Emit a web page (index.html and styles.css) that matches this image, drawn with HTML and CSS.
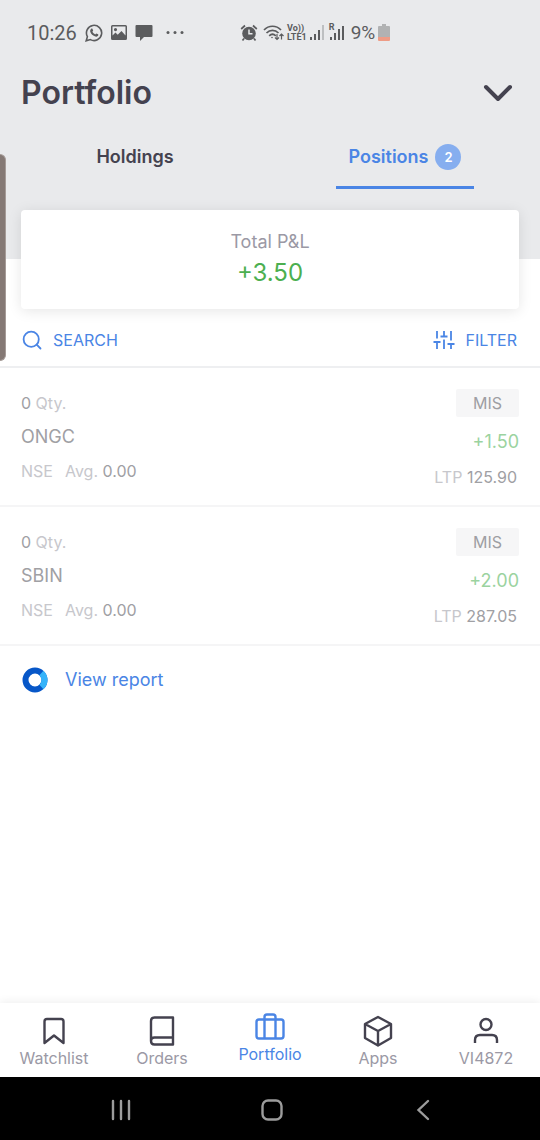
FILE: index.html
```html
<!DOCTYPE html>
<html lang="en">
<head>
<meta charset="utf-8">
<meta name="viewport" content="width=device-width, initial-scale=1">
<title>Portfolio</title>
<link rel="stylesheet" href="styles.css">
</head>
<body>
<div class="edge-handle"></div>
<header class="header">
  <div class="status">
    <div class="status-group status-left">
      <span class="clock">10:26</span>
      <svg width="18" height="18" viewBox="0 0 18 18" fill="none" stroke="currentColor" stroke-width="1.6"><path d="M1.2 16.8l1.2-4.2a7.6 7.6 0 1 1 3 3z"/><path d="M6 5c.5-.6 1.2-.6 1.5 0l.7 1.6-.8 1.2c.6 1.2 1.5 2 2.8 2.6l1.1-1 1.8.9c.5.4.2 1.4-.4 1.800-1 .9-2.700.6-4.400-.5C6.700 10.500 5.500 9 5.200 7.500 5.100 6.500 5.500 5.500 6 5z" fill="currentColor" stroke="none"/></svg>
      <svg width="16" height="16" viewBox="0 0 16 16"><path fill="currentColor" fill-rule="evenodd" d="M1.500 0h13A1.500 1.500 0 0 1 16 1.500v12a1.500 1.500 0 0 1-1.500 1.500h-13A1.500 1.500 0 0 1 0 13.500v-12A1.500 1.500 0 0 1 1.500 0zM1.500 1.500v9l3-3 2.200 2.200L10.500 6l4 4.500v-9zM4.500 3a1.600 1.600 0 1 1 0 3.200 1.600 1.600 0 0 1 0-3.200z"/></svg>
      <svg width="18" height="18" viewBox="0 0 18 18"><path fill="currentColor" d="M1.500 1h15Q17.500 1 17.500 2v10q0 1-1 1H9l-4 4v-4H1.500q-1 0-1-1V2q0-1 1-1z"/></svg>
      <svg class="dots" width="20" height="6" viewBox="0 0 20 6" fill="currentColor"><circle cx="3" cy="2.500" r="1.500"/><circle cx="10" cy="2.500" r="1.500"/><circle cx="17" cy="2.500" r="1.500"/></svg>
    </div>
    <div class="status-group status-right">
      <svg width="18" height="18" viewBox="0 0 18 18"><circle cx="9" cy="9.500" r="6.800" fill="currentColor"/><path d="M1.200 5L5 1.500M16.800 5L13 1.500M4 14.500l-1.500 2M14 14.500l1.500 2" stroke="currentColor" stroke-width="1.700"/><path d="M9 5.500v4.300h3.500" fill="none" stroke="#e9eaec" stroke-width="1.500"/></svg>
      <svg class="wifi" width="21" height="18" viewBox="0 0 21 18" fill="none" stroke="currentColor" stroke-width="1.700"><path d="M1 6c4.800-5 12.200-5 17 0M3.500 9c3.500-3.600 8.500-3.600 12 0M6.200 11.800c2-2 4.600-2 6.600 0"/><circle cx="9" cy="13.500" r=".8" fill="currentColor" stroke="none"/><path stroke-width="1.200" d="M14 10v5.500m-2-2l2 2 2-2M18.500 15.500V10m-2 2l2-2 2 2"/></svg>
      <span class="volte"><span>Vo))</span><span>LTE1</span></span>
      <svg width="15" height="16" viewBox="0 0 15 16" fill="currentColor"><path d="M0 12h2v3H0zM4 9h2v6H4zM8 5h2v10H8z"/><path opacity=".3" d="M12 0h2v15h-2z"/></svg>
      <span class="roam"><span class="roam-mark">R</span><svg width="15" height="16" viewBox="0 0 15 16" fill="currentColor"><path d="M0 12h2v3H0zM4 8h2v7H4zM8 4h2v11H8zM12 1h2v14h-2z"/></svg></span>
      <span class="battery-text">9%</span>
      <svg width="12" height="18" viewBox="0 0 12 18"><path fill="#b1b2b3" d="M4 0h4v2h3q1 0 1 1v11H0V3q0-1 1-1h3z"/><path fill="#ee9c86" d="M0 13h12v3q0 1-1 1H1q-1 0-1-1z"/></svg>
    </div>
  </div>
  <div class="title-row">
    <h1>Portfolio</h1>
    <button class="chevron" aria-label="Expand"><svg width="30" height="20" viewBox="0 0 30 20" fill="none" stroke="currentColor" stroke-width="4" stroke-linecap="round" stroke-linejoin="round"><path d="M3 4l12 12L27 4"/></svg></button>
  </div>
  <nav class="tabs">
    <button class="tab">Holdings</button>
    <button class="tab tab-active">Positions <span class="count">2</span></button>
  </nav>
</header>
<main class="main">
  <section class="summary">
    <div class="summary-label">Total P&amp;L</div>
    <div class="summary-value">+3.50</div>
  </section>
  <div class="toolbar">
    <button class="tool"><svg width="20" height="20" viewBox="0 0 20 20" fill="none" stroke="currentColor" stroke-width="1.800" stroke-linecap="round"><circle cx="9.200" cy="9.200" r="7.600"/><path d="M14.700 14.700L18.500 18.500"/></svg>SEARCH</button>
    <button class="tool"><svg width="22" height="20" viewBox="0 0 22 20" fill="none" stroke="currentColor" stroke-width="1.800"><path d="M4 1v7.500M4 12v7M.500 12h7M11 1v5.500M11 9.500V19M7.500 6.500h7M18 1v9.500M18 14v5M14.500 14h7"/></svg>FILTER</button>
  </div>
  <article class="position">
    <div class="col">
      <div class="small"><span class="dim">0</span> Qty.</div>
      <div class="symbol">ONGC</div>
      <div class="small"><span class="exchange">NSE</span>Avg. <span class="dim">0.00</span></div>
    </div>
    <div class="col col-right">
      <div class="chip">MIS</div>
      <div class="gain">+1.50</div>
      <div class="small">LTP <span class="dim">125.90</span></div>
    </div>
  </article>
  <article class="position">
    <div class="col">
      <div class="small"><span class="dim">0</span> Qty.</div>
      <div class="symbol">SBIN</div>
      <div class="small"><span class="exchange">NSE</span>Avg. <span class="dim">0.00</span></div>
    </div>
    <div class="col col-right">
      <div class="chip">MIS</div>
      <div class="gain">+2.00</div>
      <div class="small">LTP <span class="dim">287.05</span></div>
    </div>
  </article>
  <a class="report" href="#report"><svg width="26" height="26" viewBox="0 0 26 26" fill="none" stroke-width="6"><circle cx="13" cy="13" r="9.500" stroke="#0757c8"/><path stroke="#35b3fa" d="M19.400 6a9.500 9.500 0 0 1 0 14"/></svg>View report</a>
</main>
<nav class="bottom-nav">
  <a class="nav-item" href="#watchlist"><svg width="32" height="32" viewBox="0 0 32 32"><path d="M6.500 28V6.500q0-2.500 2.500-2.500h14q2.500 0 2.500 2.500V28L16 20.500z"/></svg>Watchlist</a>
  <a class="nav-item" href="#orders"><svg width="32" height="32" viewBox="0 0 32 32"><path d="M27 2.500H8.500Q5 2.500 5 6v20q0 3.500 3.500 3.500H27zM5 26q0-3.500 3.500-3.500H27"/></svg>Orders</a>
  <a class="nav-item nav-active" href="#portfolio"><svg width="32" height="32" viewBox="0 0 32 32"><rect x="2.500" y="8.500" width="27" height="19" rx="2.500"/><path d="M10.500 27.500V6q0-2.500 2.500-2.500h6q2.500 0 2.500 2.500v21.500"/></svg>Portfolio</a>
  <a class="nav-item" href="#apps"><svg width="32" height="32" viewBox="0 0 32 32"><path d="M16 2L29 9v14L16 30.500 3 23V9zM3 9l13 7 13-7M16 16v14"/></svg>Apps</a>
  <a class="nav-item" href="#account"><svg width="32" height="32" viewBox="0 0 32 32"><circle cx="16" cy="9.500" r="5.500"/><path d="M5 28v-3q0-5 5-5h12q5 0 5 5v3"/></svg>VI4872</a>
</nav>
<div class="system-bar">
  <button aria-label="Recents"><svg width="24" height="24" viewBox="0 0 24 24"><path d="M4 3v18M12 3v18M20 3v18"/></svg></button>
  <button aria-label="Home"><svg width="24" height="24" viewBox="0 0 24 24"><rect x="2.500" y="2.500" width="19" height="19" rx="5.500"/></svg></button>
  <button aria-label="Back"><svg width="24" height="24" viewBox="0 0 24 24"><path d="M17 3l-9.500 9L17 21"/></svg></button>
</div>
</body>
</html>
```
FILE: styles.css
```css
* { box-sizing: border-box; }
body {
  margin: 0;
  min-height: 100vh;
  display: flex;
  flex-direction: column;
  position: relative;
  background: #fff;
  color: #44424f;
  font: 16px/20px Inter, "Liberation Sans", sans-serif;
}
button {
  border: 0;
  padding: 0;
  background: none;
  color: inherit;
  font: inherit;
}
a { text-decoration: none; color: inherit; }
svg { display: block; flex: none; }

.edge-handle {
  position: absolute;
  left: 0;
  top: 154px;
  width: 6px;
  height: 207px;
  border: 1px solid #a69c98;
  border-left: 0;
  border-radius: 0 6px 6px 0;
  background: #857975;
}

.header { background: #e9eaec; padding-bottom: 70px; }
.status {
  display: flex;
  height: 64px;
  padding: 2px 20px 0 27px;
  color: #5b5c5e;
  font-family: Roboto, sans-serif;
}
.status-group { display: flex; align-items: center; }
.status-left { gap: 8px; width: 213px; }
.clock { font-size: 20px; }
.dots { margin-left: 4px; }
.status-right { gap: 3px; }
.wifi { margin-left: 2px; }
.volte {
  display: flex;
  flex-direction: column;
  font-size: 9px;
  line-height: 9px;
  font-weight: 700;
}
.roam { position: relative; margin-left: 2px; }
.roam-mark {
  position: absolute;
  left: -1px;
  top: -2px;
  font-size: 9px;
  line-height: 9px;
  font-weight: 700;
}
.battery-text { margin-left: 3px; font-size: 19px; }

.title-row {
  display: flex;
  align-items: center;
  justify-content: space-between;
  height: 56px;
  padding: 2px 27px 0 21px;
}
h1 { margin: 0; font-size: 32px; line-height: 40px; font-weight: 600; }
.tabs { display: grid; grid-template-columns: 1fr 1fr; justify-items: center; }
.tab {
  display: flex;
  align-items: center;
  gap: 7px;
  height: 69px;
  padding: 8px 13px 0;
  border-bottom: 3px solid transparent;
  font-size: 18px;
  font-weight: 600;
}
.tab-active { color: #4a85e5; border-color: #4a85e5; }
.count {
  width: 26px;
  border-radius: 50%;
  background: #86aeef;
  color: #fff;
  font-size: 13px;
  line-height: 26px;
  text-align: center;
}

.main { flex: 1; }
.summary {
  margin: -49px 21px 0;
  padding: 20px;
  border-radius: 4px;
  background: #fff;
  box-shadow: 0 2px 14px rgba(0, 0, 0, .1);
  position: relative;
  text-align: center;
}
.summary-label { color: #9b99a5; font-size: 18px; line-height: 24px; }
.summary-value { padding-top: 3px; color: #4caf50; font-size: 24px; line-height: 32px; }

.toolbar {
  display: flex;
  justify-content: space-between;
  padding: 19px 23px 14px 22px;
  border-bottom: 2px solid #eeeff1;
}
.tool { display: flex; align-items: center; gap: 11px; height: 24px; color: #4a85e5; }

.position {
  display: flex;
  justify-content: space-between;
  padding: 21px 21px 18px;
  border-bottom: 2px solid #f5f5f6;
}
.col { padding-top: 4px; }
.small { color: #c7c7cc; }
.dim { color: #a0a0a4; }
.symbol { padding: 13px 0; color: #a0a0a4; font-size: 18px; line-height: 22px; }
.exchange { margin-right: 12px; }
.col-right {
  display: flex;
  flex-direction: column;
  align-items: flex-end;
  padding-top: 0;
}
.chip {
  padding: 4px 17px;
  border-radius: 2px;
  background: #f6f6f7;
  color: #9e9ea3;
}
.gain { padding: 14px 0; color: #9bd39f; font-size: 18px; line-height: 22px; }
.col-right .small { padding-right: 2px; }

.report {
  display: inline-flex;
  align-items: center;
  gap: 17px;
  padding: 21px 22px;
  color: #4a85e5;
  font-size: 18px;
  line-height: 26px;
}

.bottom-nav {
  display: grid;
  grid-template-columns: repeat(5, 1fr);
  height: 74px;
  background: #fff;
  box-shadow: 0 -2px 8px rgba(0, 0, 0, .06);
}
.nav-item {
  display: flex;
  flex-direction: column;
  align-items: center;
  gap: 1px;
  padding-top: 12px;
  color: #9b99a5;
}
.nav-item svg {
  fill: none;
  stroke: #44424f;
  stroke-width: 2.4;
  stroke-linejoin: round;
}
.nav-active { padding-top: 8px; color: #4a85e5; }
.nav-item.nav-active svg { stroke: #4a85e5; }

.system-bar {
  display: flex;
  align-items: center;
  justify-content: space-between;
  height: 63px;
  padding: 2px 105px 0 109px;
  background: #000;
}
.system-bar svg { fill: none; stroke: #9c9c9c; stroke-width: 2.4; stroke-linecap: round; }
```
